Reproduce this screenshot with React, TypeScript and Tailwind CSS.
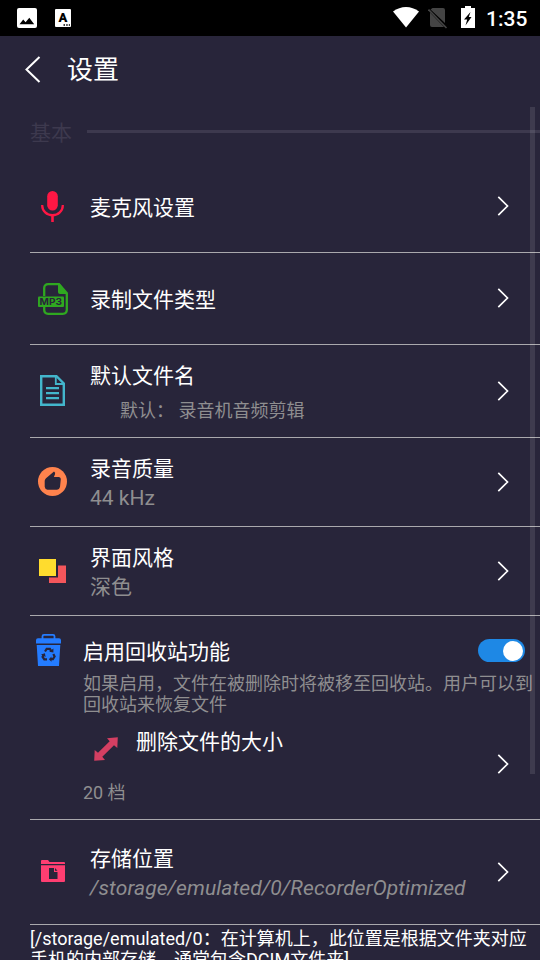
import type { ReactNode } from "react";

function StatusBar() {
  return (
    <header className="flex h-9 shrink-0 items-center bg-black text-white">
      <svg className="ml-[17px]" width="20" height="20" viewBox="0 0 20 20">
        <rect width="20" height="20" rx="2" fill="#fff" />
        <path d="M2.500 16.200 6.200 11.600 8.600 14.300 12.300 9.800 17.200 16.200z" fill="#000" />
      </svg>
      <svg className="ml-[18px]" width="16" height="18" viewBox="0 0 16 18">
        <rect width="16" height="18" rx="1" fill="#fff" />
        <text x="8" y="13.200" textAnchor="middle" fontFamily="Roboto" fontWeight="900" fontSize="13">A</text>
        <path d="M8.500 15.200h1.500v1.500H8.500zm2.700 0h1.500v1.500h-1.500zm2.600 0h1.200v1.500h-1.200z" />
      </svg>
      <svg className="mb-0.5 ml-auto" width="26" height="21" viewBox="0 0 26 21">
        <path d="M0 4.500Q6 0 13 0t13 4.500L13 20.500z" fill="#fff" />
      </svg>
      <svg className="ml-[9px]" width="20" height="21" viewBox="0 0 20 21">
        <path d="M4.500 0H15q2 0 2 2v13L2.500 1.500zM2 4.500 16 19H4q-2 0-2-2z" fill="#444" />
        <path d="M.5 1.500 18.500 20" stroke="#444" strokeWidth="1.600" />
      </svg>
      <svg className="mb-0.5 ml-[13px]" width="14" height="22" viewBox="0 0 14 22">
        <path d="M4 0h6v2h4v20H0V2h4z" fill="#fff" />
        <path d="M9.500 6 3 13.500h3.200L4.500 19.500l6-8.500H7.800z" fill="#000" />
      </svg>
      <span className="ml-[11px] mr-3 w-[42px] whitespace-nowrap pt-px text-[21px] leading-9 font-medium">1:35</span>
    </header>
  );
}

function MicIcon() {
  return (
    <svg width="24" height="32" viewBox="0 0 24 32" fill="#ff1744">
      <rect x="6.200" width="10.600" height="19.500" rx="5.300" />
      <path d="M1.200 14v.5a10.300 9.700 0 0 0 20.600 0V14" fill="none" stroke="#ff1744" strokeWidth="2.300" />
      <path d="M10.200 24h2.600v7h-2.600z" />
    </svg>
  );
}

function Mp3Icon() {
  return (
    <svg width="30" height="32" viewBox="0 0 30 32">
      <path d="M6.200 13V5.200q0-4 4-4H21l7.800 9v16.600q0 4-4 4H10.200q-4 0-4-4v-3" fill="none" stroke="#2fa820" strokeWidth="2.300" />
      <path d="M20 1h2l7 9v1h-7q-2 0-2-2z" fill="#2fa820" />
      <rect y="13.500" width="26" height="10.500" rx="1" fill="#2fa820" />
      <text x="1.500" y="22" fontFamily="Inter" fontWeight="700" fontSize="9" textLength="22.500" lengthAdjust="spacingAndGlyphs" fill="#28253a">MP3</text>
    </svg>
  );
}

function DocumentIcon() {
  return (
    <svg className="mb-0.5" width="25" height="31" viewBox="0 0 25 31" fill="none" stroke="#43b6cc" strokeWidth="2.400">
      <path d="M1.200 1.200h15.300l7.300 7.300v21.300H1.200z" />
      <path d="M15.800 1v8h8" strokeWidth="1.800" />
      <path d="M6 13.200h13M6 18.200h13M6 23.200h13" strokeWidth="2.200" />
    </svg>
  );
}

function QualityIcon() {
  return (
    <svg className="mb-px" width="29" height="29" viewBox="0 0 29 29">
      <circle cx="14.500" cy="14.500" r="14.500" fill="#ff834d" />
      <path d="M16 4.500q1.700 1 1 2.700L15.900 10H21q1.800.3 1.800 2l-.8 8q-.6 2.700-3 2.700H9.500q-2.500-.4-2.800-3v-6q.2-1.500 1.300-2.500z" fill="#28253a" />
    </svg>
  );
}

function ThemeIcon() {
  return (
    <svg width="27" height="24" viewBox="0 0 27 24">
      <path d="M19 6.500h8V24H10v-5.500h9z" fill="#f4565b" />
      <path d="M0 0h17v17H0z" fill="#ffdc2e" />
    </svg>
  );
}

function TrashIcon() {
  return (
    <svg width="25" height="32" viewBox="0 0 25 32">
      <path d="M6.500 5V2.200Q6.500.9 8 .9h9q1.500 0 1.500 1.300V5" fill="none" stroke="#247cff" strokeWidth="1.800" />
      <path d="M2 4.200h21q2 0 2 2V9.500H0V6.200q0-2 2-2zM.7 11h23.600L23 32H2z" fill="#247cff" />
      <g fill="none" stroke="#28253a" strokeWidth="2.200">
        <path d="m9 17.500 1.700-2.600h3.200l1.500 2.500" />
        <path d="m17.300 20 1.300 2.500-1.700 2.700h-2" />
        <path d="M11 25.300H8.300l-1.700-2.500 1-2" />
      </g>
      <path d="m13.200 17.800 4.200.7v-4zM15.500 22.600v5.200l-2.700-2.500zM5 20.600l3.900-1.300.7 3.600z" fill="#28253a" />
    </svg>
  );
}

function ResizeIcon() {
  return (
    <svg width="24" height="24" viewBox="0 0 24 24" fill="#d43f62">
      <path d="M13 1.200 23.800.2 23.300 11 20 8.300 8.300 19.800 11 23 .2 23.800.7 13 4 15.700 15.700 4.200z" />
    </svg>
  );
}

function FolderIcon() {
  return (
    <svg className="mb-0.5" width="24" height="22" viewBox="0 0 24 22">
      <path d="M0 4V1q0-1 1-1h6l1.500 2H23q1 0 1 1v1zM0 5.300h24V21q0 1-1 1H1q-1 0-1-1z" fill="#ff3e71" />
      <path d="M8 8h5v4h3.500v7H8zM14 8l2.500 2.800H14z" fill="#28253a" />
    </svg>
  );
}

function Chevron() {
  return (
    <svg className="mr-[31px] mb-px ml-auto shrink-0" width="12" height="20" viewBox="0 0 12 20" fill="none" stroke="#fff" strokeWidth="1.700">
      <path d="m1.300.8 9.200 9.200-9.200 9.200" />
    </svg>
  );
}

function Row({ className, icon, children }: { className: string; icon: ReactNode; children: ReactNode }) {
  return (
    <section className={`ml-[30px] flex shrink-0 items-center border-b border-[#aaa9ad] ${className}`}>
      <div className="flex w-[45px] shrink-0 justify-center">{icon}</div>
      <div className="ml-[15px] pt-[3px] whitespace-nowrap text-[21px] leading-[29px]">{children}</div>
      <Chevron />
    </section>
  );
}

export default function App() {
  return (
    <main className="relative flex h-[960px] w-[540px] flex-col overflow-hidden bg-[#28253a] font-['Roboto','Noto_Sans_CJK_SC',sans-serif] text-white">
      <StatusBar />
      <div className="flex h-[66px] shrink-0 items-center">
        <svg className="ml-[25px]" width="16" height="27" viewBox="0 0 16 27" fill="none" stroke="#fff" strokeWidth="2">
          <path d="M14.500 1 1.500 13.500l13 12.500" />
        </svg>
        <h1 className="ml-[26px] pt-0.5 text-[26px] leading-9">设置</h1>
      </div>
      <div className="ml-[30px] flex h-[59px] shrink-0 items-center text-[#3d394e]">
        <h2 className="w-[57px] pt-1 text-[21px]">基本</h2>
        <div className="h-[3px] flex-1 bg-[#3d394e]" />
      </div>

      <Row className="h-[92px]" icon={<MicIcon />}>麦克风设置</Row>
      <Row className="h-[92px]" icon={<Mp3Icon />}>录制文件类型</Row>
      <Row className="h-[93px]" icon={<DocumentIcon />}>
        <p className="pt-0.5">默认文件名</p>
        <p className="mt-[5px] pl-[30px] text-[18px] text-[#8f8e90]">默认： 录音机音频剪辑</p>
      </Row>
      <Row className="h-[89px]" icon={<QualityIcon />}>
        <p>录音质量</p>
        <p className="text-[#8f8e90]">44 kHz</p>
      </Row>
      <Row className="h-[89px]" icon={<ThemeIcon />}>
        <p>界面风格</p>
        <p className="text-[#8f8e90]">深色</p>
      </Row>

      <section className="ml-[30px] flex h-[204px] shrink-0 border-b border-[#aaa9ad]">
        <div className="w-[53px] shrink-0 pt-[18px] pl-1.5">
          <TrashIcon />
        </div>
        <div className="flex-1 whitespace-nowrap">
          <div className="mt-[21px] flex h-[30px] items-center">
            <span className="pt-0.5 text-[21px]">启用回收站功能</span>
            <div className="mr-[15px] mb-[3px] ml-auto flex h-[23px] w-[47px] items-center justify-end rounded-full bg-[#1e88e5] pr-0.5">
              <div className="size-5 rounded-full bg-white" />
            </div>
          </div>
          <p className="mt-1.5 text-[18px] leading-[21px] text-[#8f8e90]">
            如果启用，文件在被删除时将被移至回收站。用户可以到
            <br />
            回收站来恢复文件
          </p>
          <div className="flex h-[105px]">
            <div>
              <div className="mt-3 flex h-[30px] items-start">
                <div className="ml-[11px] w-[42px] pt-2.5">
                  <ResizeIcon />
                </div>
                <span className="text-[21px] leading-[30px]">删除文件的大小</span>
              </div>
              <p className="mt-[22px] text-[18px] leading-7 tracking-[-0.1px] text-[#8f8e90]">20 档</p>
            </div>
            <div className="flex h-[98px] flex-1 items-center">
              <Chevron />
            </div>
          </div>
        </div>
      </section>

      <Row className="h-[105px]" icon={<FolderIcon />}>
        <p>存储位置</p>
        <p className="tracking-[0.1px] text-[#8f8e90] italic">/storage/emulated/0/RecorderOptimized</p>
      </Row>
      <p className="ml-[30px] pt-[3px] text-[18px] leading-[21px] whitespace-nowrap">
        [/storage/emulated/0：在计算机上，此位置是根据文件夹对应
        <br />
        手机的内部存储，通常包含DCIM文件夹]
      </p>

      <div className="absolute top-[107px] right-[5px] h-[667px] w-[5px] bg-white/10" />
    </main>
  );
}
